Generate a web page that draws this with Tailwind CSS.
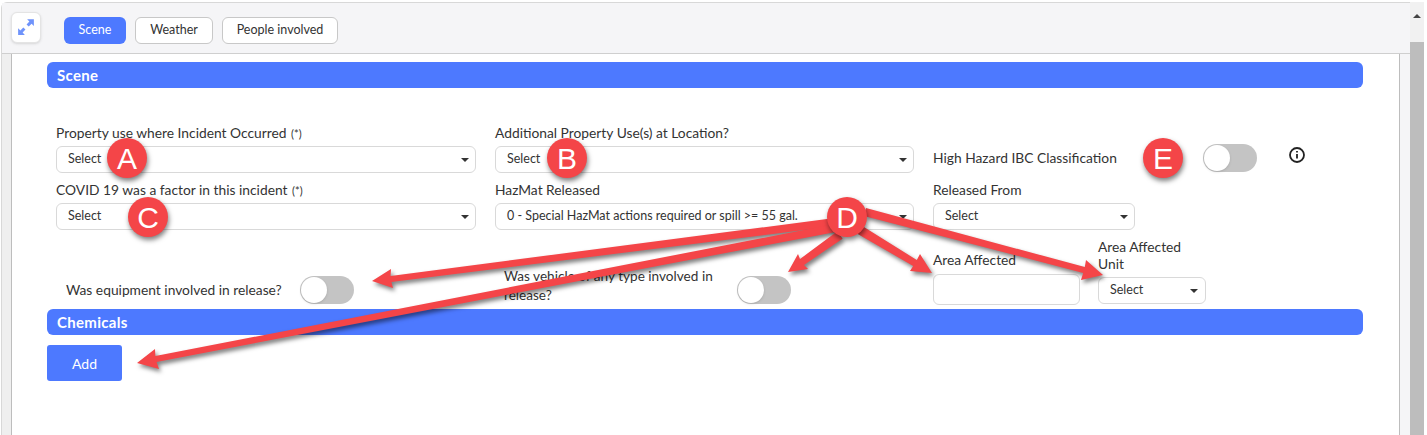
<!DOCTYPE html>
<html lang="en">

<head>
    <meta charset="UTF-8">
    <title>Scene</title>
    <script src="https://cdn.jsdelivr.net/npm/@tailwindcss/browser@4"></script>
</head>

<body class="relative w-[1427px] h-[435px] overflow-hidden bg-white text-[#333] font-['Lato','Liberation_Sans',sans-serif] text-[12.5px]">

    <div class="flex h-full pt-[2px] pl-[1px]">
        <div class="flex flex-col w-[1409px] border-t border-l border-[#d8d8d8] rounded-tl-md">
            <!-- tabs -->
            <div class="flex items-center h-[51px] shrink-0 bg-[#f5f5f7] border-b border-[#cfcfcf]">
                <button class="flex items-center justify-center w-[30px] h-[31px] ml-[9px] mb-[2px] bg-white border border-[#e4e4e4] rounded-md shadow-sm">
                    <svg width="18" height="18" viewBox="0 0 16 16" fill="#6f93fb">
                        <path d="M15 1v6l-2-2-2.6 2.6-1.9-1.900L11 3.100 9 1z" />
                        <path d="M1 15V9l2 2 2.600-2.600 1.900 1.900L5 12.900l2 2.100z" />
                    </svg>
                </button>
                <div class="flex items-center gap-[9px] ml-[23px] mt-[5px]">
                    <button class="w-[62px] h-[27px] bg-[#4d79ff] text-white rounded-md">Scene</button>
                    <button class="w-[78px] h-[27px] bg-white border border-[#c8c8c8] rounded-md">Weather</button>
                    <button class="w-[116px] h-[27px] bg-white border border-[#c8c8c8] rounded-md">People involved</button>
                </div>
            </div>

            <div class="flex flex-1 min-h-0">
                <div class="w-[9px] shrink-0 bg-[#efefef]"></div>
                <!-- form -->
                <div class="w-[1389px] shrink-0 bg-white border-x border-[#bdbdbd] pl-[35px] pt-[8px]">
                    <div class="flex items-center w-[1316px] h-[26px] pl-[10px] bg-[#4d79ff] text-white text-[15px] font-bold tracking-[0.3px] rounded-md">Scene</div>

                    <div class="grid grid-cols-[420px_419px_430px] gap-x-[19px] ml-[9px] mt-[37px]">
                        <div class="h-[57px]">
                            <label class="block h-[21px] leading-[16px] text-[13.8px]">Property use where Incident Occurred <span class="text-[11px] ml-[1px]">(*)</span></label>
                            <div class="flex items-center justify-between h-[27px] pl-[11px] pr-[6px] border border-[#d9d9d9] rounded-md">Select<span class="border-x-[4px] border-t-[4px] border-x-transparent border-t-[#333]"></span></div>
                        </div>
                        <div class="h-[57px]">
                            <label class="block h-[21px] leading-[16px] text-[13.8px]">Additional Property Use(s) at Location?</label>
                            <div class="flex items-center justify-between h-[27px] pl-[11px] pr-[6px] border border-[#d9d9d9] rounded-md">Select<span class="border-x-[4px] border-t-[4px] border-x-transparent border-t-[#333]"></span></div>
                        </div>
                        <div class="flex items-start h-[57px] pt-[19px]">
                            <label class="leading-[28px] w-[270px] text-[13.8px]">High Hazard IBC Classification</label>
                            <span class="flex items-center w-[54px] h-[28px] p-[1px] bg-[#c4c4c4] rounded-full"><span class="w-[26px] h-[26px] bg-white rounded-full shadow"></span></span>
                            <svg class="ml-[31px] mt-[2px]" width="18" height="18" viewBox="0 0 18 18" fill="none" stroke="#222" stroke-width="1.8">
                                <circle cx="9" cy="9" r="7" />
                                <path d="M9 8v4.500M9 5v1.600" />
                            </svg>
                        </div>

                        <div>
                            <label class="block h-[21px] leading-[16px] text-[13.8px]">COVID 19 was a factor in this incident <span class="text-[11px] ml-[1px]">(*)</span></label>
                            <div class="flex items-center justify-between h-[27px] pl-[11px] pr-[6px] border border-[#d9d9d9] rounded-md">Select<span class="border-x-[4px] border-t-[4px] border-x-transparent border-t-[#333]"></span></div>
                        </div>
                        <div>
                            <label class="block h-[21px] leading-[16px] text-[13.8px]">HazMat Released</label>
                            <div class="flex items-center justify-between h-[27px] pl-[11px] pr-[6px] border border-[#d9d9d9] rounded-md">0 - Special HazMat actions required or spill &gt;= 55 gal.<span class="border-x-[4px] border-t-[4px] border-x-transparent border-t-[#333]"></span></div>
                        </div>
                        <div>
                            <label class="block h-[21px] leading-[16px] text-[13.8px]">Released From</label>
                            <div class="flex items-center justify-between w-[202px] h-[27px] pl-[11px] pr-[6px] border border-[#d9d9d9] rounded-md">Select<span class="border-x-[4px] border-t-[4px] border-x-transparent border-t-[#333]"></span></div>
                        </div>
                    </div>

                    <!-- third row -->
                    <div class="flex items-end h-[79px] ml-[19px] pb-[5px] text-[13.8px]">
                        <div class="flex items-center w-[438px] h-[28px]">
                            <label class="w-[234px]">Was equipment involved in release?</label>
                            <span class="flex items-center w-[54px] h-[28px] p-[1px] bg-[#c4c4c4] rounded-full"><span class="w-[26px] h-[26px] bg-white rounded-full shadow"></span></span>
                        </div>
                        <div class="flex items-center w-[429px] h-[28px]">
                            <label class="w-[233px] leading-[19px] pr-[10px] mb-[9px] text-[13.6px]">Was vehicle of any type involved in release?</label>
                            <span class="flex items-center w-[54px] h-[28px] p-[1px] bg-[#c4c4c4] rounded-full"><span class="w-[26px] h-[26px] bg-white rounded-full shadow"></span></span>
                        </div>
                        <div class="w-[165px] mb-[-1px]">
                            <label class="block h-[21px] leading-[14px]">Area Affected</label>
                            <div class="w-[147px] h-[31px] border border-[#d9d9d9] rounded-md"></div>
                        </div>
                        <div class="w-[108px]">
                            <label class="block w-[100px] leading-[17px] mb-[5px]">Area Affected Unit</label>
                            <div class="flex items-center justify-between h-[27px] pl-[11px] pr-[7px] border border-[#d9d9d9] rounded-md text-[12.5px]">Select<span class="border-x-[4px] border-t-[4px] border-x-transparent border-t-[#333]"></span></div>
                        </div>
                    </div>

                    <div class="flex items-center w-[1316px] h-[26px] pl-[10px] bg-[#4d79ff] text-white text-[15px] font-bold tracking-[0.3px] rounded-md">Chemicals</div>
                    <button class="block w-[75px] h-[36px] mt-[10px] bg-[#4d79ff] text-white text-[14px] rounded-[3px]">Add</button>
                </div>
                <div class="flex-1 bg-[#f5f5f7]"></div>
            </div>
        </div>

        <!-- scrollbar -->
        <div class="flex flex-col w-[14px] pt-[1px] bg-[#f1f1f1]">
            <div class="flex items-center justify-center h-[39px] pb-[13px]"><span class="border-x-[4px] border-b-[4px] border-x-transparent border-b-[#444]"></span></div>
            <div class="flex-1 bg-[#bdbdbd]"></div>
        </div>
    </div>

    <!-- callout arrows -->
    <svg class="absolute inset-0 drop-shadow-[2px_3px_2px_rgba(0,0,0,0.5)]" width="1427" height="435" fill="#f44548">
        <polygon points="835.500,226 834.500,218 390.600,276 391,269 372,281 393,288 391.400,282" />
        <polygon points="835.800,231.900 834.200,224.100 155.400,356.100 155,349 137,363 159,369 156.600,361.900" />
        <polygon points="842.600,238.700 837.400,231.300 800,259.100 798,254 788,272 808,269 804,264.900" />
        <polygon points="857.700,233.900 862.300,226.100 916.800,260 920,254 932,273 910,271 913.200,266" />
        <polygon points="864,215.900 866,208.100 1084.800,267.100 1086,260 1103,275 1081,280 1083.200,272.900" />
    </svg>

    <!-- callout letters -->
    <span class="absolute left-[107px] top-[138px] flex items-center justify-center w-10 h-10 bg-[#f44548] text-white text-[30px] font-['Liberation_Sans',sans-serif] rounded-full shadow-[1px_3px_5px_rgba(0,0,0,0.5)]">A</span>
    <span class="absolute left-[547px] top-[138px] flex items-center justify-center w-10 h-10 bg-[#f44548] text-white text-[30px] font-['Liberation_Sans',sans-serif] rounded-full shadow-[1px_3px_5px_rgba(0,0,0,0.5)]">B</span>
    <span class="absolute left-[128px] top-[197px] flex items-center justify-center w-10 h-10 bg-[#f44548] text-white text-[30px] font-['Liberation_Sans',sans-serif] rounded-full shadow-[1px_3px_5px_rgba(0,0,0,0.5)]">C</span>
    <span class="absolute left-[827px] top-[197px] flex items-center justify-center w-10 h-10 bg-[#f44548] text-white text-[30px] font-['Liberation_Sans',sans-serif] rounded-full shadow-[1px_3px_5px_rgba(0,0,0,0.5)]">D</span>
    <span class="absolute left-[1143px] top-[138px] flex items-center justify-center w-10 h-10 bg-[#f44548] text-white text-[30px] font-['Liberation_Sans',sans-serif] rounded-full shadow-[1px_3px_5px_rgba(0,0,0,0.5)]">E</span>
</body>

</html>
